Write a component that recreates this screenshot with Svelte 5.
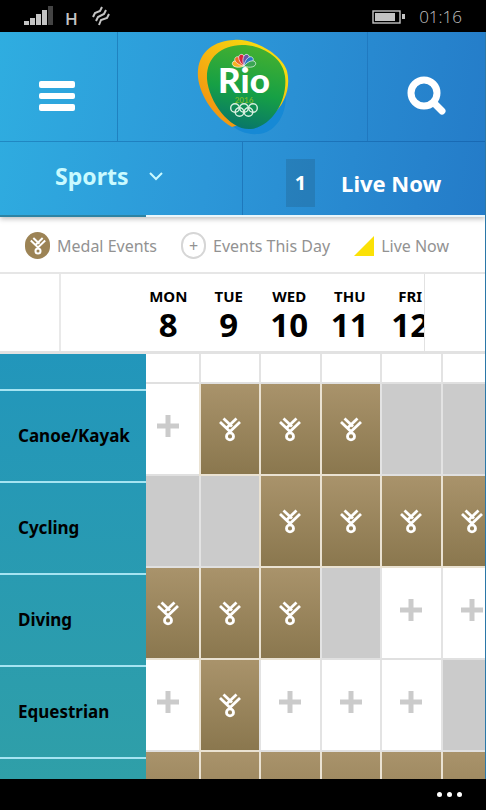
<script>
  const days = [
    { name: "MON", date: 8 },
    { name: "TUE", date: 9 },
    { name: "WED", date: 10 },
    { name: "THU", date: 11 },
    { name: "FRI", date: 12 },
  ];

  // m = medal event, e = event, x = nothing scheduled, . = blank
  const sports = [
    { name: "", cells: "......", short: true },
    { name: "Canoe/Kayak", cells: "emmmxx" },
    { name: "Cycling", cells: "xxmmmm" },
    { name: "Diving", cells: "mmmxee" },
    { name: "Equestrian", cells: "emeeex" },
    { name: "", cells: "mmmmmm", next: true },
  ];

  const petals = [
    { angle: -75, color: "#f6b221" },
    { angle: -45, color: "#ee6a25" },
    { angle: -16, color: "#d8223c" },
    { angle: 16, color: "#6a55a5" },
    { angle: 45, color: "#2a78c4" },
    { angle: 75, color: "#3aa552" },
  ];
</script>

{#snippet medal()}
  <svg class="medal" viewBox="0 0 22 25" aria-hidden="true">
    <path d="M1 5 L11 14.5 L21 5 M4.5 1.5 L13 9.5 M17.5 1.5 L7.5 11" />
    <circle cx="11" cy="19.4" r="3.5" />
  </svg>
{/snippet}

<div class="app">
  <div class="status">
    <svg class="signal" viewBox="0 0 30 20" aria-hidden="true">
      <path d="M0 15h5v4H0z M6 12h5v7H6z M12 8h5v11h-5z M18 4h5v15h-5z" fill="#c4c4c4" />
      <path d="M24 0h5v19h-5z" fill="#444" />
    </svg>
    <span class="network">H</span>
    <svg class="vibrate" viewBox="0 0 18 20" aria-hidden="true">
      <path d="M10 1 L8 5 L3 7 L1 11 M14 4 L12 8 L6 11 L4 15 M17 8 L15 12 L9 14 L7 19" />
    </svg>
    <svg class="battery" viewBox="0 0 34 14" aria-hidden="true">
      <rect x="1" y="1" width="27" height="12" fill="none" stroke="#c4c4c4" stroke-width="1.4" />
      <path d="M3 3h20v8H3z M30 4h3v5h-3z" fill="#c4c4c4" />
    </svg>
    <time>01:16</time>
  </div>

  <div class="screen">
    <header>
      <div class="top">
        <button class="menu" aria-label="Menu">
          <svg viewBox="0 0 36 30" aria-hidden="true">
            <rect width="36" height="7" rx="2" />
            <rect y="12" width="36" height="6" rx="2" />
            <rect y="23" width="36" height="7" rx="2" />
          </svg>
        </button>
        <a class="logo" href="#home" aria-label="Rio 2016 home">
          <svg viewBox="0 0 92 96">
            <defs>
              <linearGradient id="gold" x1="0" y1="1" x2="1" y2="0">
                <stop offset="0.2" stop-color="#f29a12" />
                <stop offset="0.8" stop-color="#f8d90f" />
              </linearGradient>
              <linearGradient id="green" x1="0.6" y1="0" x2="0.4" y2="1">
                <stop offset="0" stop-color="#45b02f" />
                <stop offset="0.55" stop-color="#16a045" />
                <stop offset="1" stop-color="#08756b" />
              </linearGradient>
            </defs>
            <path d="M88 50 C92 72 80 94 61 95 C49 96 40 91 34 86 Z" fill="#1689d5" />
            <path d="M37 1 C56 -1 85 15 90 32 C94 48 88 66 75 76 L35 88 C14 76 -1 50 1 31 C3 12 17 2 37 1 Z" fill="url(#gold)" />
            <path d="M45 6 C66 6 86 19 88 37 C91 60 76 87 54 90 C34 92 12 64 10 40 C9 19 23 7 45 6 Z" fill="url(#green)" />
            <g transform="translate(47 27)">
              {#each petals as petal}
                <path d="M0 0 C-4 -5 -4 -12 0 -12 C4 -12 4 -5 0 0 Z" fill={petal.color} stroke="#fff" stroke-width="0.6" transform="rotate({petal.angle})" />
              {/each}
            </g>
            <text class="rio" x="47" y="54" text-anchor="middle">Rio</text>
            <text class="year" x="47" y="64" text-anchor="middle">2016</text>
            <g fill="none" stroke="#d9efe0" stroke-width="1.4">
              <circle cx="38" cy="69" r="4.3" />
              <circle cx="47" cy="69" r="4.3" />
              <circle cx="56" cy="69" r="4.3" />
              <circle cx="42.5" cy="73" r="4.3" />
              <circle cx="51.5" cy="73" r="4.3" />
            </g>
          </svg>
        </a>
        <button class="search" aria-label="Search">
          <svg viewBox="0 0 40 40" aria-hidden="true">
            <circle cx="17" cy="17" r="13" />
            <path d="M27 27 L35 35" />
          </svg>
        </button>
      </div>
      <nav>
        <button class="sports">
          Sports
          <svg viewBox="0 0 16 10" aria-hidden="true"><path d="M2 2 L8 8 L14 2" /></svg>
        </button>
        <a class="live" href="#live"><span class="count">1</span>Live Now</a>
      </nav>
    </header>

    <ul class="legend">
      <li><span class="dot gold">{@render medal()}</span>Medal Events</li>
      <li><span class="dot ring">+</span>Events This Day</li>
      <li>
        <svg class="flag" viewBox="0 0 20 20" aria-hidden="true"><path d="M0 20 L20 0 V20 Z" /></svg>Live Now
      </li>
    </ul>

    <table>
      <thead>
        <tr>
          <td class="prev"><button aria-label="Previous days"></button></td>
          {#each days as day (day.date)}
            <th scope="col">{day.name}<strong>{day.date}</strong></th>
          {/each}
          <td class="next"><button aria-label="Next days"></button></td>
        </tr>
      </thead>
      <tbody>
        {#each sports as sport}
          <tr class:short={sport.short}>
            <th scope="row">{sport.name}</th>
            {#each sport.cells as cell}
              <td class:medals={cell === "m"} class:none={cell === "x"}>
                {#if cell === "m" && !sport.next}
                  {@render medal()}
                {:else if cell === "e"}
                  <svg class="plus" viewBox="0 0 22 22" aria-label="Event"><path d="M11 0 V22 M0 11 H22" /></svg>
                {/if}
              </td>
            {/each}
          </tr>
        {/each}
      </tbody>
    </table>
  </div>

  <footer>
    <button aria-label="More"><i></i><i></i><i></i></button>
  </footer>
</div>

<style>
  :global(body) {
    margin: 0;
    background: #000;
  }
  .app {
    --day: calc((100vw - 123px) / 6);
    display: flex;
    flex-direction: column;
    height: 100vh;
    overflow: hidden;
    font-family: "Noto Sans", "Open Sans", sans-serif;
    background: #000;
  }
  button {
    padding: 0;
    border: none;
    background: none;
    font: inherit;
    color: inherit;
    cursor: pointer;
  }
  a {
    color: inherit;
    text-decoration: none;
  }
  svg {
    display: block;
  }

  /* phone status bar */
  .status {
    display: flex;
    align-items: center;
    flex: none;
    height: 32px;
    padding: 0 24px;
    box-sizing: border-box;
    color: #c4c4c4;
  }
  .signal {
    width: 30px;
    height: 20px;
  }
  .network {
    margin: 6px 14px 0 11px;
    font-family: "Open Sans", sans-serif;
    font-size: 17px;
    line-height: 20px;
    font-weight: 600;
  }
  .vibrate {
    width: 18px;
    height: 20px;
    fill: none;
    stroke: #c4c4c4;
    stroke-width: 2;
  }
  .battery {
    width: 34px;
    height: 14px;
    margin: 2px 13px 0 auto;
  }
  time {
    font-family: "Open Sans", sans-serif;
    font-size: 17px;
    font-weight: 300;
    line-height: 32px;
    margin-top: 2px;
  }

  .screen {
    display: flex;
    flex-direction: column;
    flex: 1;
    min-height: 0;
    overflow: hidden;
    background: #fff;
    border-right: 1px solid #2b78a8;
  }

  header {
    position: relative;
    flex: none;
    background: linear-gradient(100deg, #2fade0 0%, #2c97d8 45%, #247bc8 100%);
    box-shadow: 0 2px 5px rgba(0, 0, 0, 0.25);
    color: #fff;
  }
  .top {
    display: flex;
    height: 109px;
    border-bottom: 1px solid rgba(0, 60, 130, 0.3);
  }
  .menu,
  .search {
    display: flex;
    align-items: center;
    justify-content: center;
    width: 118px;
    box-sizing: border-box;
    padding-top: 18px;
  }
  .menu {
    padding-right: 3px;
    border-right: 1px solid rgba(0, 60, 130, 0.3);
  }
  .menu svg {
    width: 36px;
    height: 30px;
    fill: #fff;
  }
  .search {
    border-left: 1px solid rgba(0, 60, 130, 0.2);
  }
  .search svg {
    width: 40px;
    height: 40px;
    fill: none;
    stroke: #fff;
    stroke-width: 7;
    stroke-linecap: round;
  }
  .logo {
    display: flex;
    flex: 1;
    justify-content: center;
    align-items: center;
  }
  .logo svg {
    width: 92px;
    height: 96px;
  }
  .rio {
    font-family: Lato, sans-serif;
    font-size: 35px;
    font-weight: 900;
    fill: #fff;
  }
  .year {
    font-family: Lato, sans-serif;
    font-size: 8px;
    font-weight: 700;
    fill: #75b82b;
  }
  nav {
    display: flex;
    height: 73px;
    border-bottom: 2px solid #e9f6fb;
    border-image: linear-gradient(90deg, #2d83a3 146px, #e9f6fb 146px) 1;
  }
  nav > * {
    display: flex;
    align-items: center;
    justify-content: center;
    width: 50%;
    box-sizing: border-box;
    font-size: 23px;
    font-weight: 700;
  }
  .sports {
    gap: 20px;
    padding: 0 22px 6px 0;
    border-right: 1px solid rgba(0, 60, 130, 0.3);
    font-size: 23px;
    font-weight: 700;
    color: #c9faff;
  }
  .sports svg {
    width: 16px;
    height: 10px;
    fill: none;
    stroke: #c9faff;
    stroke-width: 2;
  }
  .live {
    gap: 26px;
    padding-top: 8px;
    font-size: 22px;
  }
  .count {
    width: 29px;
    background: rgba(30, 80, 110, 0.25);
    font-size: 20px;
    line-height: 48px;
    text-align: center;
  }

  .legend {
    display: flex;
    align-items: center;
    flex: none;
    gap: 24px;
    height: 55px;
    margin: 0;
    padding: 2px 0 0 25px;
    box-sizing: border-box;
    list-style: none;
    font-size: 16px;
    color: #929292;
    white-space: nowrap;
  }
  .legend li {
    display: flex;
    align-items: center;
    gap: 7px;
  }
  .dot {
    display: flex;
    align-items: center;
    justify-content: center;
    width: 25px;
    height: 27px;
    border-radius: 13px;
    box-sizing: border-box;
  }
  .gold {
    background: #9c8355;
  }
  .gold .medal {
    width: 16px;
    height: 18px;
  }
  .ring {
    border: 2px solid #d6d6d6;
    line-height: 20px;
  }
  .flag {
    width: 20px;
    height: 20px;
    fill: #fbe106;
  }
  .medal {
    width: 22px;
    height: 25px;
    fill: none;
    stroke: #fff;
    stroke-width: 2.8;
  }

  table {
    display: flex;
    flex-direction: column;
    flex: 1;
    min-height: 0;
    overflow: hidden;
    color: #000;
  }
  thead {
    display: block;
    flex: none;
  }
  thead tr {
    position: relative;
    display: flex;
    height: 77px;
    border-top: 2px solid #e6e6e6;
    border-bottom: 3px solid #e2e2e2;
  }
  thead td {
    padding: 0;
  }
  thead th {
    flex: none;
    width: var(--day);
    padding: 12px 0 0;
    font-size: 15px;
    line-height: 20px;
  }
  thead strong {
    display: block;
    font-size: 33px;
    font-weight: 700;
    line-height: 37px;
  }
  .prev {
    flex: none;
    width: 138px;
  }
  .prev button {
    display: block;
    width: 61px;
    height: 100%;
    border-right: 2px solid #e9e9e9;
  }
  /* sits over the days that run past the edge */
  .next {
    position: absolute;
    top: 0;
    right: 0;
    bottom: 0;
    width: 60px;
    border-left: 1px solid #e2e2e2;
    background: #fff;
  }
  .next button {
    width: 100%;
    height: 100%;
  }

  tbody {
    display: block;
    flex: 1;
    min-height: 0;
    overflow: hidden;
    background: linear-gradient(#2296bb, #2f9fa8) 0 0 / 146px 100% no-repeat;
  }
  tbody tr {
    display: flex;
    height: 92px;
  }
  tbody tr.short {
    height: 30px;
  }
  tbody th {
    display: flex;
    align-items: center;
    flex: none;
    width: 146px;
    /* labels hang a little lower than their cells */
    margin: 7px 0 -7px;
    padding: 0 0 2px 18px;
    box-sizing: border-box;
    border-bottom: 2px solid #a5e4f2;
    font-size: 17px;
    text-align: left;
  }
  tbody td {
    display: flex;
    align-items: center;
    justify-content: center;
    flex: none;
    width: var(--day);
    padding: 0;
    box-sizing: border-box;
    border-left: 2px solid #e3e3e3;
    border-bottom: 2px solid #e0e0e0;
    background: #fff;
    background-clip: padding-box;
  }
  tbody td:nth-child(2) {
    width: calc(var(--day) - 8px);
    padding-right: 8px;
    border-left: none;
  }
  tbody td.none {
    background-color: #cbcbcb;
  }
  tbody td.medals {
    border-color: #eae2d2;
    background: linear-gradient(#a9936b, #8a774e);
    background-clip: padding-box;
  }
  .plus {
    width: 22px;
    height: 22px;
    margin-bottom: 6px;
    fill: none;
    stroke: #cbcbcb;
    stroke-width: 5;
  }

  footer {
    display: flex;
    align-items: center;
    justify-content: flex-end;
    flex: none;
    height: 31px;
    padding-right: 24px;
  }
  footer button {
    display: flex;
    gap: 5px;
  }
  footer i {
    width: 5px;
    height: 5px;
    border-radius: 50%;
    background: #fff;
  }
</style>
